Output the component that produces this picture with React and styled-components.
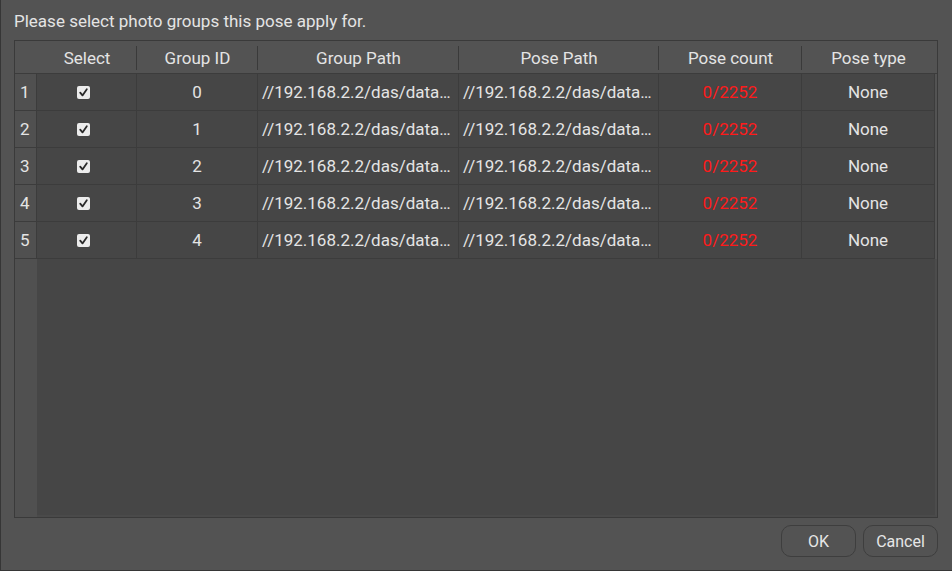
import React from "react";
import styled, { createGlobalStyle } from "styled-components";

const Global = createGlobalStyle`
  html, body { margin: 0; padding: 0; background: #535353; }
  body { font-family: Roboto, "Noto Sans", "Liberation Sans", sans-serif; }
  * { box-sizing: border-box; }
`;

const Window = styled.div`
  width: 952px;
  height: 571px;
  background: #535353;
  border-left: 1px solid #363636;
  border-bottom: 1px solid #363636;
  display: flex;
  flex-direction: column;
  color: #e2e2e2;
  font-size: 17px;
`;

const Prompt = styled.div`
  height: 40px;
  padding: 11px 0 0 13px;
  line-height: 20px;
  color: #e4e4e4;
`;

const TableFrame = styled.div`
  margin: 0 14px 0 13px;
  height: 478px;
  border: 1px solid #3a3a3a;
  display: flex;
  flex-direction: column;
  overflow: hidden;
`;

const cols = "22px 100px 121px 201px 200px 143px 133px";

const HeaderRow = styled.div`
  display: grid;
  grid-template-columns: ${cols};
  height: 33px;
  border-bottom: 1px solid #3c3c3c;
  background: #535353;
`;

const HeadCell = styled.div`
  display: flex;
  align-items: center;
  justify-content: center;
  position: relative;
  color: #e4e4e4;
  padding-top: 1px;
  &::after {
    content: "";
    display: ${(p) => (p.$sep ? "block" : "none")};
    position: absolute;
    right: 0;
    top: 5px;
    bottom: 3px;
    width: 1px;
    background: #3a3a3a;
  }
`;

const Body = styled.div`
  flex: 1;
  display: grid;
  grid-template-columns: 22px 1fr;
  grid-template-rows: auto 1fr;
`;

const Rows = styled.div`
  grid-column: 1 / span 2;
  display: flex;
  flex-direction: column;
`;

const Row = styled.div`
  display: grid;
  grid-template-columns: ${cols};
  height: 37px;
`;

const RowHead = styled.div`
  background: #505050;
  border-right: 1px solid #3c3c3c;
  border-bottom: 1px solid #3c3c3c;
  display: flex;
  align-items: center;
  padding-left: 5px;
  color: #e4e4e4;
`;

const Cell = styled.div`
  background: #464646;
  border-right: 1px solid #3c3c3c;
  border-bottom: 1px solid #3c3c3c;
  display: flex;
  align-items: center;
  justify-content: ${(p) => (p.$left ? "flex-start" : "center")};
  padding: ${(p) => (p.$left ? "0 0 0 4px" : "0")};
  color: ${(p) => (p.$red ? "#ff1a1a" : "#e4e4e4")};
  white-space: nowrap;
  overflow: hidden;
`;

const FillHead = styled.div`
  background: #505050;
`;

const FillData = styled.div`
  background: #464646;
  border-right: 2px solid #4c4c4c;
  border-bottom: 2px solid #4a4a4a;
`;

const Check = styled.span`
  width: 13px;
  height: 13px;
  border-radius: 2px;
  background: #ececec;
  display: inline-flex;
  align-items: center;
  justify-content: center;
  margin-left: -6px;
  margin-top: 1px;
`;

const Footer = styled.div`
  display: flex;
  justify-content: flex-end;
  gap: 7px;
  padding: 7px 14px 0 0;
`;

const Button = styled.button`
  width: 75px;
  height: 32px;
  border: 1px solid #3e3e3e;
  border-radius: 10px;
  background: #535353;
  color: #e6e6e6;
  font-family: inherit;
  font-size: 16px;
  padding: 0;
`;

const rows = [0, 1, 2, 3, 4];

function CheckBox() {
  return (
    <Check>
      <svg width="11" height="11" viewBox="0 0 11 11">
        <path d="M2.2 5.6 L4.5 8.4 L8.8 2.2" fill="none" stroke="#2a2a2a" strokeWidth="1.8" strokeLinecap="round" strokeLinejoin="round" />
      </svg>
    </Check>
  );
}

export default function App() {
  return (
    <>
      <Global />
      <Window>
        <Prompt>Please select photo groups this pose apply for.</Prompt>
        <TableFrame>
          <HeaderRow>
            <HeadCell />
            <HeadCell $sep>Select</HeadCell>
            <HeadCell $sep>Group ID</HeadCell>
            <HeadCell $sep>Group Path</HeadCell>
            <HeadCell $sep>Pose Path</HeadCell>
            <HeadCell $sep>Pose count</HeadCell>
            <HeadCell>Pose type</HeadCell>
          </HeaderRow>
          <Body>
            <Rows>
              {rows.map((i) => (
                <Row key={i}>
                  <RowHead>{i + 1}</RowHead>
                  <Cell>
                    <CheckBox />
                  </Cell>
                  <Cell>{i}</Cell>
                  <Cell $left>//192.168.2.2/das/data…</Cell>
                  <Cell $left>//192.168.2.2/das/data…</Cell>
                  <Cell $red>0/2252</Cell>
                  <Cell>None</Cell>
                </Row>
              ))}
            </Rows>
            <FillHead />
            <FillData />
          </Body>
        </TableFrame>
        <Footer>
          <Button>OK</Button>
          <Button>Cancel</Button>
        </Footer>
      </Window>
    </>
  );
}
